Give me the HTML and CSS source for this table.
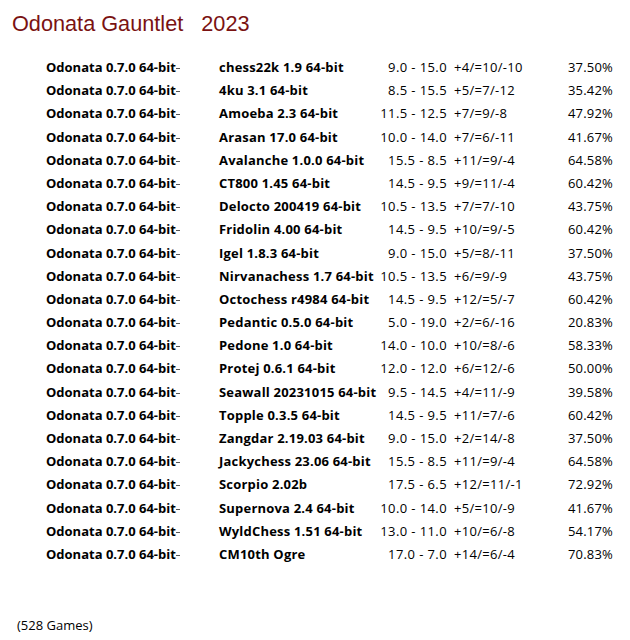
FILE: index.html
```html
<!DOCTYPE html>
<html>
<head>
<meta charset="utf-8">
<title>Odonata Gauntlet 2023</title>
<link rel="stylesheet" href="styles.css">
</head>
<body>
<h1 class="title">Odonata Gauntlet&nbsp;&nbsp; 2023</h1>
<div class="results">
  <div class="row"><span class="eng">Odonata 0.7.0 64-bit<span class="tick"></span></span><span class="opp">chess22k 1.9 64-bit</span><span class="score">9.0 - 15.0</span><span class="rec">+4/=10/-10</span><span class="pct">37.50%</span></div>
  <div class="row"><span class="eng">Odonata 0.7.0 64-bit<span class="tick"></span></span><span class="opp">4ku 3.1 64-bit</span><span class="score">8.5 - 15.5</span><span class="rec">+5/=7/-12</span><span class="pct">35.42%</span></div>
  <div class="row"><span class="eng">Odonata 0.7.0 64-bit<span class="tick"></span></span><span class="opp">Amoeba 2.3 64-bit</span><span class="score">11.5 - 12.5</span><span class="rec">+7/=9/-8</span><span class="pct">47.92%</span></div>
  <div class="row"><span class="eng">Odonata 0.7.0 64-bit<span class="tick"></span></span><span class="opp">Arasan 17.0 64-bit</span><span class="score">10.0 - 14.0</span><span class="rec">+7/=6/-11</span><span class="pct">41.67%</span></div>
  <div class="row"><span class="eng">Odonata 0.7.0 64-bit<span class="tick"></span></span><span class="opp">Avalanche 1.0.0 64-bit</span><span class="score">15.5 - 8.5</span><span class="rec">+11/=9/-4</span><span class="pct">64.58%</span></div>
  <div class="row"><span class="eng">Odonata 0.7.0 64-bit<span class="tick"></span></span><span class="opp">CT800 1.45 64-bit</span><span class="score">14.5 - 9.5</span><span class="rec">+9/=11/-4</span><span class="pct">60.42%</span></div>
  <div class="row"><span class="eng">Odonata 0.7.0 64-bit<span class="tick"></span></span><span class="opp">Delocto 200419 64-bit</span><span class="score">10.5 - 13.5</span><span class="rec">+7/=7/-10</span><span class="pct">43.75%</span></div>
  <div class="row"><span class="eng">Odonata 0.7.0 64-bit<span class="tick"></span></span><span class="opp">Fridolin 4.00 64-bit</span><span class="score">14.5 - 9.5</span><span class="rec">+10/=9/-5</span><span class="pct">60.42%</span></div>
  <div class="row"><span class="eng">Odonata 0.7.0 64-bit<span class="tick"></span></span><span class="opp">Igel 1.8.3 64-bit</span><span class="score">9.0 - 15.0</span><span class="rec">+5/=8/-11</span><span class="pct">37.50%</span></div>
  <div class="row"><span class="eng">Odonata 0.7.0 64-bit<span class="tick"></span></span><span class="opp">Nirvanachess 1.7 64-bit</span><span class="score">10.5 - 13.5</span><span class="rec">+6/=9/-9</span><span class="pct">43.75%</span></div>
  <div class="row"><span class="eng">Odonata 0.7.0 64-bit<span class="tick"></span></span><span class="opp">Octochess r4984 64-bit</span><span class="score">14.5 - 9.5</span><span class="rec">+12/=5/-7</span><span class="pct">60.42%</span></div>
  <div class="row"><span class="eng">Odonata 0.7.0 64-bit<span class="tick"></span></span><span class="opp">Pedantic 0.5.0 64-bit</span><span class="score">5.0 - 19.0</span><span class="rec">+2/=6/-16</span><span class="pct">20.83%</span></div>
  <div class="row"><span class="eng">Odonata 0.7.0 64-bit<span class="tick"></span></span><span class="opp">Pedone 1.0 64-bit</span><span class="score">14.0 - 10.0</span><span class="rec">+10/=8/-6</span><span class="pct">58.33%</span></div>
  <div class="row"><span class="eng">Odonata 0.7.0 64-bit<span class="tick"></span></span><span class="opp">Protej 0.6.1 64-bit</span><span class="score">12.0 - 12.0</span><span class="rec">+6/=12/-6</span><span class="pct">50.00%</span></div>
  <div class="row"><span class="eng">Odonata 0.7.0 64-bit<span class="tick"></span></span><span class="opp">Seawall 20231015 64-bit</span><span class="score">9.5 - 14.5</span><span class="rec">+4/=11/-9</span><span class="pct">39.58%</span></div>
  <div class="row"><span class="eng">Odonata 0.7.0 64-bit<span class="tick"></span></span><span class="opp">Topple 0.3.5 64-bit</span><span class="score">14.5 - 9.5</span><span class="rec">+11/=7/-6</span><span class="pct">60.42%</span></div>
  <div class="row"><span class="eng">Odonata 0.7.0 64-bit<span class="tick"></span></span><span class="opp">Zangdar 2.19.03 64-bit</span><span class="score">9.0 - 15.0</span><span class="rec">+2/=14/-8</span><span class="pct">37.50%</span></div>
  <div class="row"><span class="eng">Odonata 0.7.0 64-bit<span class="tick"></span></span><span class="opp">Jackychess 23.06 64-bit</span><span class="score">15.5 - 8.5</span><span class="rec">+11/=9/-4</span><span class="pct">64.58%</span></div>
  <div class="row"><span class="eng">Odonata 0.7.0 64-bit<span class="tick"></span></span><span class="opp">Scorpio 2.02b</span><span class="score">17.5 - 6.5</span><span class="rec">+12/=11/-1</span><span class="pct">72.92%</span></div>
  <div class="row"><span class="eng">Odonata 0.7.0 64-bit<span class="tick"></span></span><span class="opp">Supernova 2.4 64-bit</span><span class="score">10.0 - 14.0</span><span class="rec">+5/=10/-9</span><span class="pct">41.67%</span></div>
  <div class="row"><span class="eng">Odonata 0.7.0 64-bit<span class="tick"></span></span><span class="opp">WyldChess 1.51 64-bit</span><span class="score">13.0 - 11.0</span><span class="rec">+10/=6/-8</span><span class="pct">54.17%</span></div>
  <div class="row"><span class="eng">Odonata 0.7.0 64-bit<span class="tick"></span></span><span class="opp">CM10th Ogre</span><span class="score">17.0 - 7.0</span><span class="rec">+14/=6/-4</span><span class="pct">70.83%</span></div>
</div>
<p class="games">(528 Games)</p>
</body>
</html>
```

FILE: styles.css
```css
html, body {
  margin: 0;
  padding: 0;
  background: #ffffff;
}

body {
  font-family: "Open Sans", "Noto Sans", sans-serif;
  color: #000000;
}

.title {
  margin: 0;
  padding: 11px 0 0 12px;
  font-family: "Liberation Sans", Arial, sans-serif;
  font-weight: normal;
  font-size: 21.7px;
  line-height: 26px;
  color: #7a1212;
  white-space: pre;
}

.results {
  margin-top: 19px;
  padding-left: 46px;
}

.row {
  display: grid;
  grid-template-columns: 173px 150px 78px 115px 51px;
  height: 23.2px;
  line-height: 23.2px;
  font-size: 13px;
  white-space: nowrap;
}

.eng, .opp {
  font-weight: bold;
}

.opp {
  letter-spacing: 0.2px;
}

.tick {
  display: inline-block;
  width: 4px;
  height: 1px;
  background: #555;
  vertical-align: middle;
}

.score {
  text-align: right;
  letter-spacing: 0.4px;
}

.rec {
  padding-left: 7px;
  letter-spacing: 0.3px;
}

.pct {
  text-align: right;
  letter-spacing: 0.2px;
}

.games {
  margin: 48px 0 0 17px;
  font-size: 13px;
  line-height: 23px;
}
```
